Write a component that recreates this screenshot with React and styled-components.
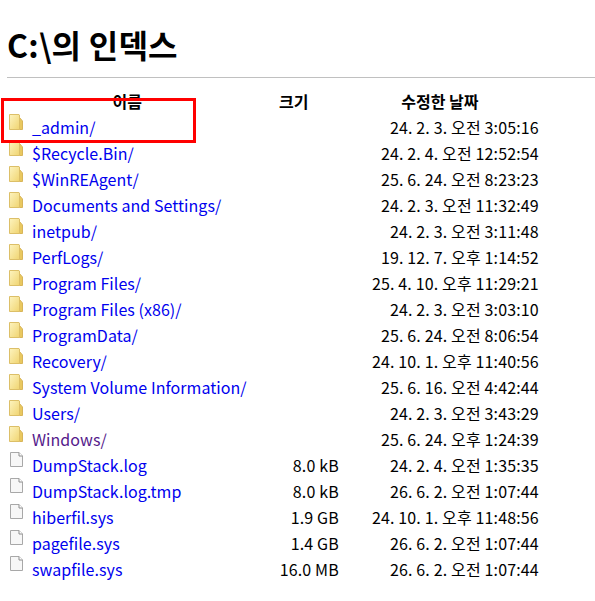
import styled, { createGlobalStyle } from "styled-components";

const GlobalStyle = createGlobalStyle`
  body {
    margin: 0;
    background: #fff;
    font-family: "Noto Sans CJK KR", "Noto Sans", sans-serif;
    font-size: 16px;
    color: #000;
  }
`;

const entries = [
  { name: "_admin/", dir: true, date: "24. 2. 3. 오전 3:05:16" },
  { name: "$Recycle.Bin/", dir: true, date: "24. 2. 4. 오전 12:52:54" },
  { name: "$WinREAgent/", dir: true, date: "25. 6. 24. 오전 8:23:23" },
  { name: "Documents and Settings/", dir: true, date: "24. 2. 3. 오전 11:32:49" },
  { name: "inetpub/", dir: true, date: "24. 2. 3. 오전 3:11:48" },
  { name: "PerfLogs/", dir: true, date: "19. 12. 7. 오후 1:14:52" },
  { name: "Program Files/", dir: true, date: "25. 4. 10. 오후 11:29:21" },
  { name: "Program Files (x86)/", dir: true, date: "24. 2. 3. 오전 3:03:10" },
  { name: "ProgramData/", dir: true, date: "25. 6. 24. 오전 8:06:54" },
  { name: "Recovery/", dir: true, date: "24. 10. 1. 오후 11:40:56" },
  { name: "System Volume Information/", dir: true, date: "25. 6. 16. 오전 4:42:44" },
  { name: "Users/", dir: true, date: "24. 2. 3. 오전 3:43:29" },
  { name: "Windows/", dir: true, visited: true, date: "25. 6. 24. 오후 1:24:39" },
  { name: "DumpStack.log", size: "8.0 kB", date: "24. 2. 4. 오전 1:35:35" },
  { name: "DumpStack.log.tmp", size: "8.0 kB", date: "26. 6. 2. 오전 1:07:44" },
  { name: "hiberfil.sys", size: "1.9 GB", date: "24. 10. 1. 오후 11:48:56" },
  { name: "pagefile.sys", size: "1.4 GB", date: "26. 6. 2. 오전 1:07:44" },
  { name: "swapfile.sys", size: "16.0 MB", date: "26. 6. 2. 오전 1:07:44" },
];

const Page = styled.div`
  position: relative;
  padding: 21px 0 8px 7px;
`;

const Title = styled.h1`
  margin: 0 0 10px;
  padding-bottom: 10px;
  border-bottom: 1px solid #c0c0c0;
  font-size: 32px;
  font-weight: 700;
  letter-spacing: 0.25px;
  white-space: nowrap;
`;

const Listing = styled.table`
  border-collapse: collapse;
`;

const HeadCell = styled.th`
  font-weight: 700;
  text-align: center;
`;

const DetailsCell = styled.td`
  padding-left: 2em;
  text-align: right;
  white-space: nowrap;
  letter-spacing: 0.15px;
`;

const NameLink = styled.a`
  position: relative;
  padding-left: 1.5em;
  color: ${(p) => (p.$visited ? "#551a8b" : "#0000ee")};
  text-decoration: none;
  letter-spacing: 0.05px;
`;

const IconSlot = styled.svg`
  position: absolute;
  left: 0;
  top: -2px;
  width: 20px;
  height: 20px;
`;

const Highlight = styled.div`
  position: absolute;
  left: 1px;
  top: 98px;
  width: 189px;
  height: 39px;
  border: 3px solid #f00;
`;

const FolderIcon = () => (
  <IconSlot viewBox="0 0 20 20">
    <defs>
      <linearGradient id="folderFill" x1="0" y1="0" x2="1" y2="1">
        <stop offset="0" stopColor="#fdf4c0" />
        <stop offset="1" stopColor="#f0d470" />
      </linearGradient>
    </defs>
    <path d="M11.500 4.500l3 3.500v8.500h-3z" fill="#e9c85f" stroke="#d8b55a" strokeWidth="1" />
    <path d="M1.500 1.500h9.500l.5 .5v14.500h-10z" fill="url(#folderFill)" stroke="#dcbf68" strokeWidth="1" />
  </IconSlot>
);

const FileIcon = () => (
  <IconSlot viewBox="0 0 20 20">
    <path d="M2.500 1.500h8.500l3.500 3.500v10.500h-12z" fill="#f7f7f7" stroke="#a8a8a8" strokeWidth="1" />
    <path d="M11 1.500v3.500h3.500" fill="#fff" stroke="#8c8c8c" strokeWidth="1" />
  </IconSlot>
);

export default function App() {
  return (
    <Page>
      <GlobalStyle />
      <Title>C:\의 인덱스</Title>
      <Listing>
        <thead>
          <tr>
            <HeadCell>이름</HeadCell>
            <HeadCell>크기</HeadCell>
            <HeadCell>수정한 날짜</HeadCell>
          </tr>
        </thead>
        <tbody>
          {entries.map((entry) => (
            <tr key={entry.name}>
              <td>
                <NameLink href="#" $visited={entry.visited}>
                  {entry.dir ? <FolderIcon /> : <FileIcon />}
                  {entry.name}
                </NameLink>
              </td>
              <DetailsCell>{entry.size}</DetailsCell>
              <DetailsCell>{entry.date}</DetailsCell>
            </tr>
          ))}
        </tbody>
      </Listing>
      <Highlight />
    </Page>
  );
}
